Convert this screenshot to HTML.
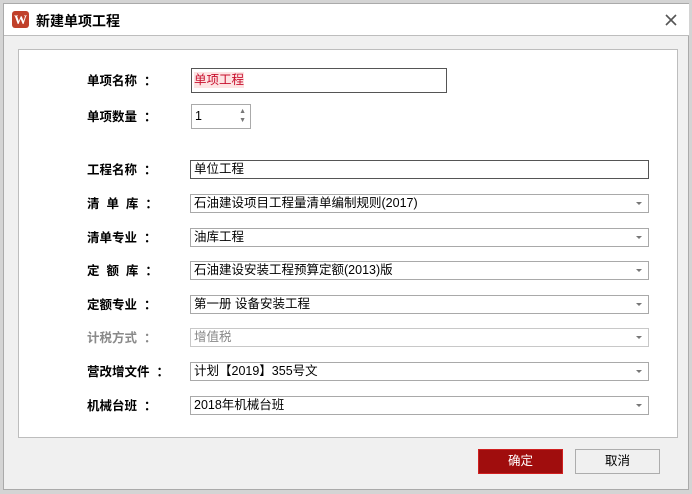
<!DOCTYPE html>
<html><head><meta charset="utf-8"><style>
*{margin:0;padding:0;box-sizing:border-box}
body{width:692px;height:494px;background:#d4d4d4;position:relative;overflow:hidden;font-family:"Liberation Sans","Noto Sans CJK SC",sans-serif;font-size:12px;color:#000}
.win{position:absolute;left:3px;top:3px;width:686px;height:487px;background:#f0f0f0;border:1px solid #aaa}
.title{position:absolute;left:0;top:0;width:100%;height:32px;background:#fff;border-bottom:1px solid #bdbdbd}
.logo{position:absolute;left:8px;top:7px;width:17px;height:17px;background:#c0402a;border-radius:3px;color:#fff;font:bold 13px "Liberation Serif",serif;text-align:center;line-height:17px}
.tt{position:absolute;left:32px;top:7px;font-size:14px;font-weight:bold}
.x{position:absolute;left:660px;top:9px;width:14px;height:14px}
.panel{position:absolute;left:18px;top:49px;width:660px;height:389px;background:#fff;border:1px solid #bdbdbd}
.lbl{position:absolute;left:87px;font-weight:bold;font-size:12.5px;line-height:18px;white-space:pre}
.f{position:absolute;left:190px;width:459px;height:19px;border:1px solid #a9a9a9;background:#fff;padding-left:3px;line-height:17px;font-size:12.5px}
.f i{position:absolute;right:6px;top:7px;border-left:3px solid transparent;border-right:3px solid transparent;border-top:3px solid #777}
.btn{position:absolute;top:449px;width:85px;height:25px;text-align:center;line-height:23px;font-size:12.5px}
</style></head><body>
<div class="win"></div>
<div class="title" style="left:4px;top:4px;width:685px;position:absolute">
<div class="logo">W</div><div class="tt">新建单项工程</div>
<svg class="x" viewBox="0 0 14 14"><path d="M2 2L12 12M12 2L2 12" stroke="#555" stroke-width="1.6"/></svg>
</div>
<div class="panel"></div>
<div class="lbl" style="top:72px">单项名称  ：</div>
<div style="position:absolute;left:191px;top:68px;width:256px;height:25px;border:1px solid #555;background:#fff"><span style="position:absolute;left:2px;top:3px;background:#fde3e3;color:#c8102e;font-size:12.5px;line-height:16px">单项工程</span></div>
<div class="lbl" style="top:108px">单项数量  ：</div>
<div style="position:absolute;left:191px;top:104px;width:60px;height:25px;border:1px solid #aaa;background:#fff;padding:4px 0 0 3px;font-size:12.5px">1<span style="position:absolute;right:4px;top:2px;font-size:7px;color:#777;line-height:9px">▲<br>▼</span></div>
<div class="lbl" style="top:161px">工程名称  ：</div>
<div class="f" style="top:160px;border-color:#555">单位工程</div>
<div class="lbl" style="top:195px">清  单  库  ：</div>
<div class="f" style="top:194px">石油建设项目工程量清单编制规则(2017)<i></i></div>
<div class="lbl" style="top:229px">清单专业  ：</div>
<div class="f" style="top:228px">油库工程<i></i></div>
<div class="lbl" style="top:262px">定  额  库  ：</div>
<div class="f" style="top:261px">石油建设安装工程预算定额(2013)版<i></i></div>
<div class="lbl" style="top:296px">定额专业  ：</div>
<div class="f" style="top:295px">第一册 设备安装工程<i></i></div>
<div class="lbl" style="top:329px;color:#8a8a8a">计税方式  ：</div>
<div class="f" style="top:328px;color:#888;border-color:#c8c8c8">增值税<i></i></div>
<div class="lbl" style="top:363px">营改增文件  ：</div>
<div class="f" style="top:362px">计划【2019】355号文<i></i></div>
<div class="lbl" style="top:397px">机械台班  ：</div>
<div class="f" style="top:396px">2018年机械台班<i></i></div>
<div class="btn" style="left:478px;background:#a00d0d;border:1px solid #d02020;color:#fff">确定</div>
<div class="btn" style="left:575px;background:#f0f0f0;border:1px solid #adadad">取消</div>
</body></html>
